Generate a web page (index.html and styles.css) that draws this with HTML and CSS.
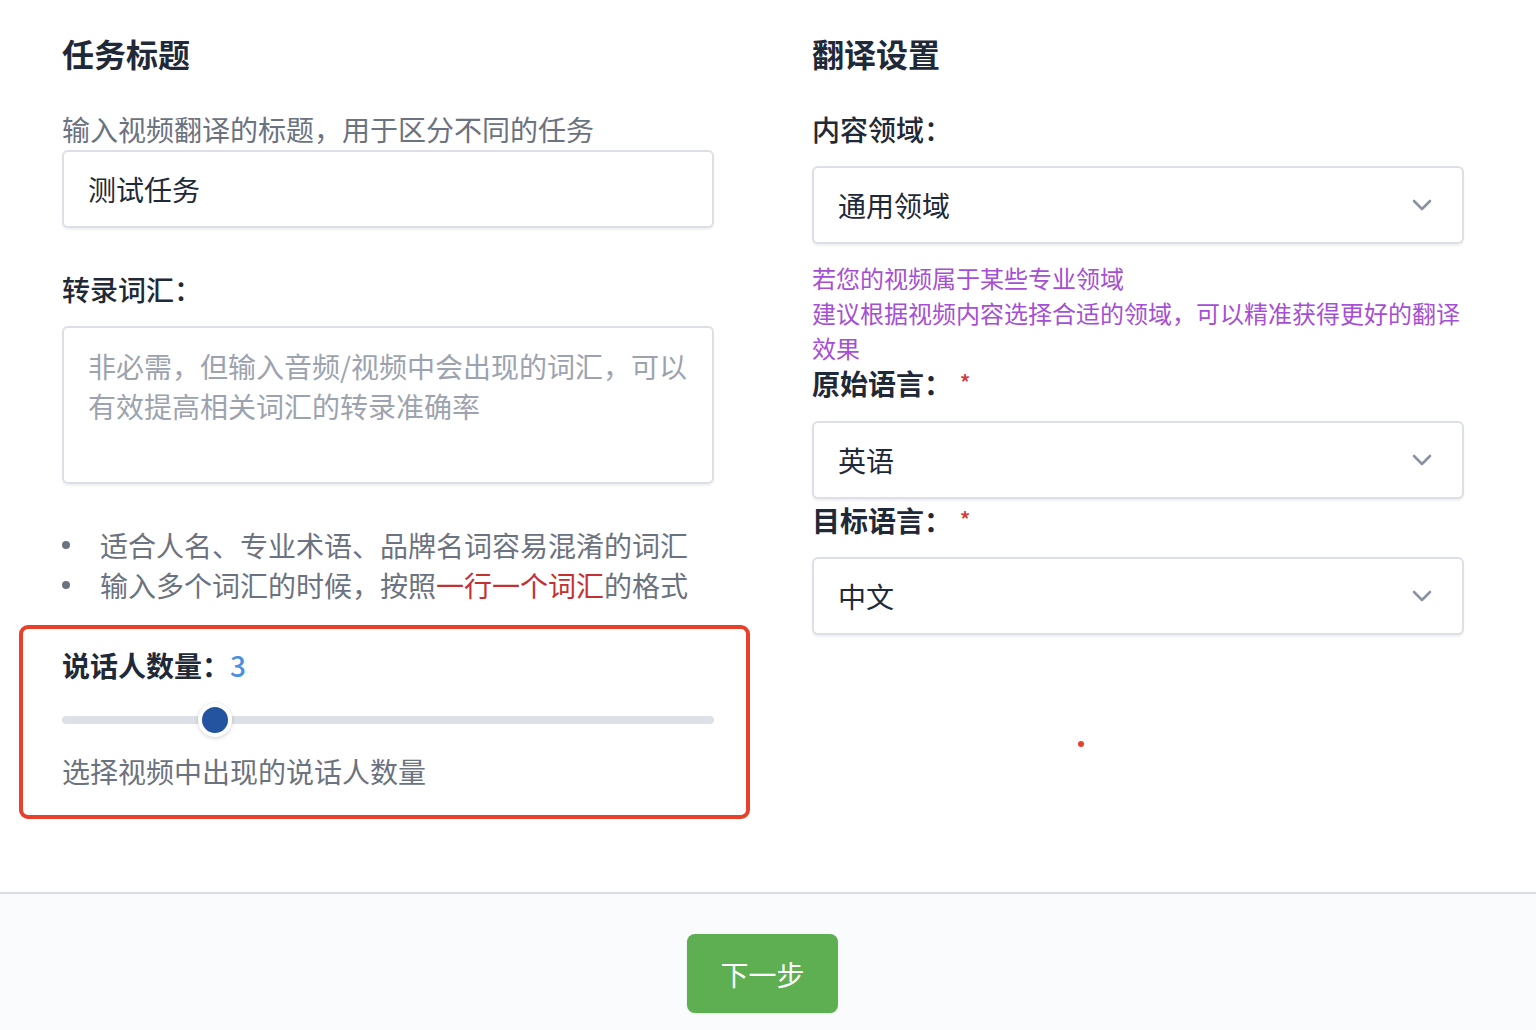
FILE: index.html
```html
<!DOCTYPE html>
<html lang="zh-CN">
<head>
<meta charset="utf-8">
<title>任务设置</title>
<link rel="stylesheet" href="styles.css">
</head>
<body>
<main class="content">
  <section class="col">
    <h2 class="title">任务标题</h2>
    <p class="hint">输入视频翻译的标题，用于区分不同的任务</p>
    <div class="field">测试任务</div>
    <div class="label">转录词汇：</div>
    <div class="textarea">非必需，但输入音频/视频中会出现的词汇，可以有效提高相关词汇的转录准确率</div>
    <ul class="tips">
      <li>适合人名、专业术语、品牌名词容易混淆的词汇</li>
      <li>输入多个词汇的时候，按照<span class="em">一行一个词汇</span>的格式</li>
    </ul>
    <div class="speakers">
      <div class="speakers-label">说话人数量：<span class="num">3</span></div>
      <div class="slider"><div class="track"></div><div class="thumb"></div></div>
      <p class="speakers-desc">选择视频中出现的说话人数量</p>
    </div>
  </section>
  <section class="col">
    <h2 class="title">翻译设置</h2>
    <div class="label label-first">内容领域：</div>
    <div class="select">
      <span>通用领域</span>
      <svg class="chev" viewBox="0 0 20 12" width="20" height="12"><path d="M2 2 L10 10 L18 2" fill="none" stroke="#8a93a3" stroke-width="2.6" stroke-linecap="round" stroke-linejoin="round"/></svg>
    </div>
    <p class="purple">若您的视频属于某些专业领域<br>建议根据视频内容选择合适的领域，可以精准获得更好的翻译效果</p>
    <div class="label label-strong label-tight">原始语言：<span class="req">*</span></div>
    <div class="select">
      <span>英语</span>
      <svg class="chev" viewBox="0 0 20 12" width="20" height="12"><path d="M2 2 L10 10 L18 2" fill="none" stroke="#8a93a3" stroke-width="2.6" stroke-linecap="round" stroke-linejoin="round"/></svg>
    </div>
    <div class="label label-strong label-zero">目标语言：<span class="req">*</span></div>
    <div class="select">
      <span>中文</span>
      <svg class="chev" viewBox="0 0 20 12" width="20" height="12"><path d="M2 2 L10 10 L18 2" fill="none" stroke="#8a93a3" stroke-width="2.6" stroke-linecap="round" stroke-linejoin="round"/></svg>
    </div>
    <div class="dot-row"><span class="dot"></span></div>
  </section>
</main>
<footer class="footer">
  <button class="next">下一步</button>
</footer>
</body>
</html>
```
FILE: styles.css
```css
* { box-sizing: border-box; }
html, body { margin: 0; padding: 0; }
body {
  font-family: "Noto Sans CJK SC", "Noto Sans", sans-serif;
  color: #1f2937;
  background: #ffffff;
  width: 1536px;
  height: 1030px;
  overflow: hidden;
  display: flex;
  flex-direction: column;
}
.content {
  display: grid;
  grid-template-columns: 652px 652px;
  column-gap: 98px;
  padding: 33px 0 0 62px;
  height: 892px;
  flex: none;
}
.col { display: flex; flex-direction: column; }
.title {
  margin: 0;
  font-size: 32px;
  line-height: 40px;
  font-weight: 700;
  color: #1f2937;
}
.hint {
  margin: 36px 0 1px;
  font-size: 28px;
  line-height: 40px;
  color: #6b7280;
}
.field, .select {
  height: 78px;
  border: 2px solid #dcdfe5;
  border-radius: 6px;
  box-shadow: 0 2px 2px rgba(0,0,0,0.06);
  padding: 0 24px;
  font-size: 28px;
  display: flex;
  align-items: center;
  color: #1f2937;
  background: #fff;
}
.select { justify-content: space-between; padding-right: 30px; }
.chev { display: block; }
.label {
  margin: 41px 0 17px;
  font-size: 28px;
  line-height: 40px;
  font-weight: 500;
  color: #1f2937;
}
.label-first { margin-top: 36px; }
.label-strong { font-weight: 600; }
.label-tight { margin: -3px 0 18px; }
.label-zero { margin: 0 0 17px; }
.req {
  color: #d04040;
  font-size: 20px;
  margin-left: 8px;
  vertical-align: 5px;
}
.textarea {
  height: 158px;
  border: 2px solid #dcdfe5;
  border-radius: 6px;
  box-shadow: 0 2px 2px rgba(0,0,0,0.06);
  padding: 18px 24px;
  font-size: 28px;
  line-height: 40px;
  color: #9ca3af;
}
.tips {
  margin: 41px 0 0;
  padding: 0;
  list-style: none;
  font-size: 28px;
  line-height: 40px;
  color: #6b7280;
}
.tips li {
  display: flex;
  align-items: center;
}
.tips li::before {
  content: "";
  width: 8px;
  height: 8px;
  border-radius: 50%;
  background: #6b7280;
  margin: 0 30px 0 0;
  flex: none;
}
.em { color: #c53030; }
.speakers {
  margin: 20px -36px 0 -43px;
  border: 4px solid #e8402a;
  border-radius: 9px;
  padding: 16px 32px 24px 39px;
}
.speakers-label {
  font-size: 28px;
  line-height: 40px;
  font-weight: 700;
  color: #1f2937;
}
.num { color: #4a90e2; font-weight: 500; }
.slider {
  position: relative;
  height: 30px;
  margin: 20px 0 0;
  display: flex;
  align-items: center;
}
.track {
  width: 100%;
  height: 8px;
  border-radius: 4px;
  background: #dde0e6;
}
.thumb {
  position: absolute;
  left: 136px;
  top: -2px;
  width: 34px;
  height: 34px;
  border-radius: 50%;
  background: #2453a0;
  border: 4px solid #fff;
  box-shadow: 0 1px 4px rgba(0,0,0,0.18);
}
.speakers-desc {
  margin: 16px 0 0;
  font-size: 28px;
  line-height: 40px;
  color: #6b7280;
}
.purple {
  margin: 16px 0 0;
  font-size: 24px;
  line-height: 35px;
  color: #a64fd4;
}
.dot-row {
  display: flex;
  padding: 106px 0 0 266px;
}
.dot {
  width: 6px;
  height: 6px;
  border-radius: 50%;
  background: #e8402a;
}
.footer {
  flex: 1;
  border-top: 2px solid #dcdde3;
  background: #fafbfd;
  display: flex;
  justify-content: center;
  padding: 40px 11px 0 0;
}
.next {
  width: 151px;
  height: 79px;
  border: none;
  border-radius: 8px;
  background: #5daf52;
  color: #fff;
  font-family: "Noto Sans CJK SC", sans-serif;
  font-size: 28px;
  box-shadow: 0 1px 2px rgba(0,0,0,0.1);
  align-self: flex-start;
}
```
